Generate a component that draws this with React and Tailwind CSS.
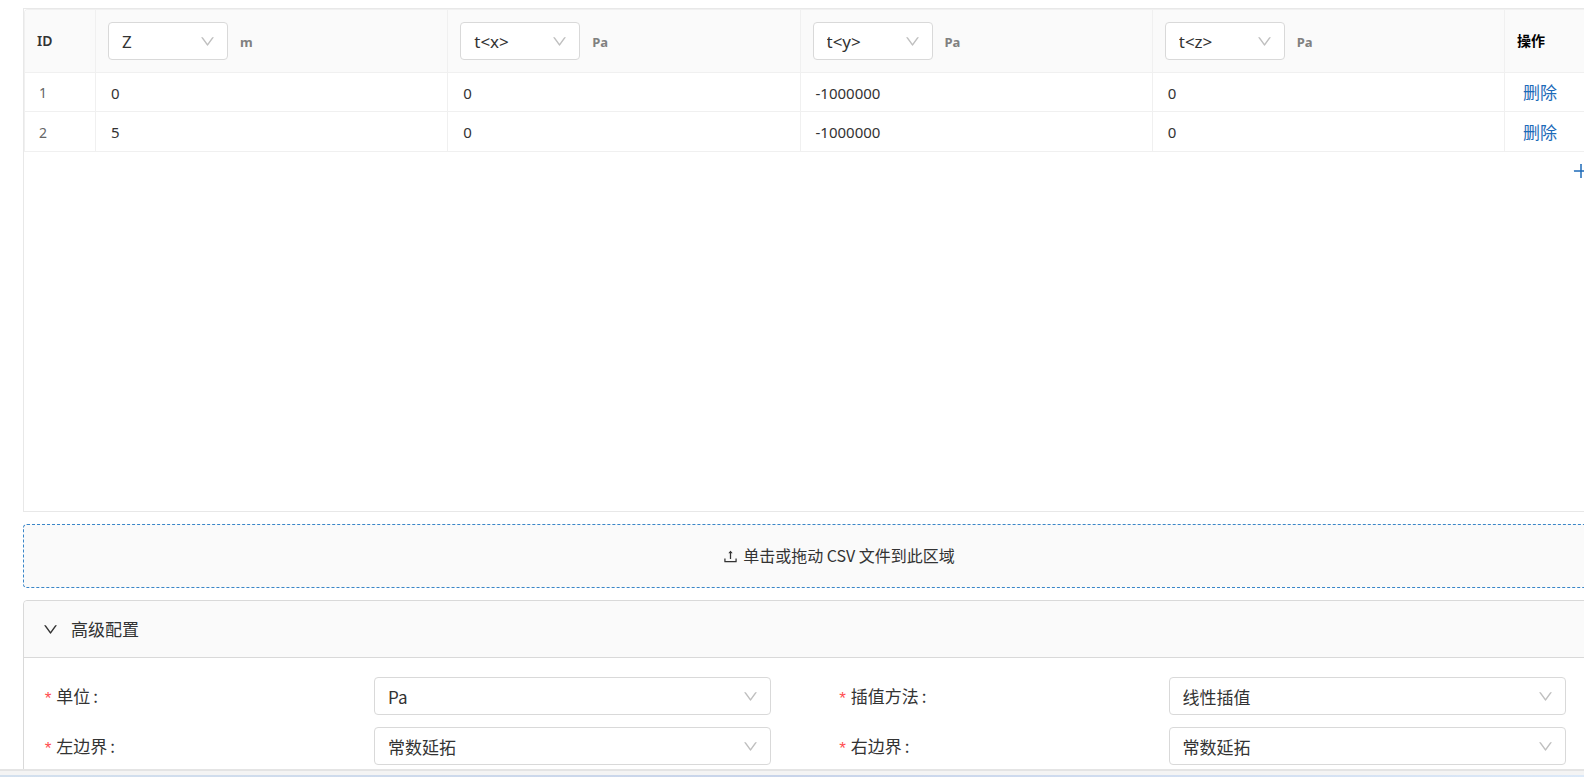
import { useState } from 'react'
import { AiOutlineDown, AiOutlinePlus, AiOutlineUpload } from 'react-icons/ai'

const AXES = ['X', 'Y', 'Z']
const COMPONENTS = ['t<x>', 't<y>', 't<z>']

const initialColumns = [
  { key: 'pos', label: '坐标', field: 'Z', unit: 'm', options: AXES },
  { key: 'tx', label: '第一分量', field: 't<x>', unit: 'Pa', options: COMPONENTS },
  { key: 'ty', label: '第二分量', field: 't<y>', unit: 'Pa', options: COMPONENTS },
  { key: 'tz', label: '第三分量', field: 't<z>', unit: 'Pa', options: COMPONENTS }
]

const initialRows = [
  { id: 1, pos: '0', tx: '0', ty: '-1000000', tz: '0' },
  { id: 2, pos: '5', tx: '0', ty: '-1000000', tz: '0' }
]

const fields = [
  { name: 'unit', label: '单位', options: ['Pa', 'kPa', 'MPa'] },
  { name: 'method', label: '插值方法', options: ['线性插值', '样条插值'] },
  { name: 'left', label: '左边界', options: ['常数延拓', '线性延拓'] },
  { name: 'right', label: '右边界', options: ['常数延拓', '线性延拓'] }
]

function Select({ options, className = '', ...props }) {
  return (
    <div className={`relative ${className}`}>
      <select
        {...props}
        className="block w-full h-[38px] pt-[2px] pl-[13px] pr-9 appearance-none bg-white border border-[#d9d9d9] rounded-[4px] text-[17px] leading-6 font-normal text-[#333333] outline-none focus:border-[#1c6ab8]"
      >
        {options.map(option => (
          <option key={option} value={option}>{option}</option>
        ))}
      </select>
      <AiOutlineDown className="absolute right-3 inset-y-0 my-auto size-[17px] text-[#bfbfbf] pointer-events-none" />
    </div>
  )
}

export default function App() {
  const [columns, setColumns] = useState(initialColumns)
  const [rows, setRows] = useState(initialRows)
  const [open, setOpen] = useState(true)

  const changeColumn = (key, field) => {
    setColumns(prev => prev.map(col => (col.key === key ? { ...col, field } : col)))
  }

  const addRow = () => {
    setRows(prev => [...prev, { id: prev.length + 1, pos: '0', tx: '0', ty: '0', tz: '0' }])
  }

  const removeRow = (id) => {
    setRows(prev => prev.filter(row => row.id !== id))
  }

  return (
    <div className="h-screen flex flex-col overflow-hidden bg-white text-[#333333] font-['Noto_Sans','Noto_Sans_CJK_SC',sans-serif]">
      <main className="flex-1 min-h-0 overflow-hidden">
        {/* The editor is wider than its pane and runs past the right edge */}
        <div className="pt-2 ml-[23px] -mr-[70px]">
          {/* Data table */}
          <div className="h-[504px] border border-[#e8e8e8] overflow-auto">
            <table className="w-full table-fixed border-separate border-spacing-0 border-t border-l border-[#f0f0f0] rounded-tl-[4px]">
              <thead>
                <tr className="h-[63px] bg-[#fafafa] text-left text-sm">
                  <th scope="col" className="w-[71px] px-3 border-r border-b border-[#f0f0f0] font-semibold rounded-tl-[4px]">ID</th>
                  {columns.map(col => (
                    <th key={col.key} scope="col" className="px-3 border-r border-b border-[#f0f0f0]">
                      <div className="flex items-center gap-3">
                        <Select
                          aria-label={col.label}
                          className="w-[120px]"
                          options={col.options}
                          value={col.field}
                          onChange={e => changeColumn(col.key, e.target.value)}
                        />
                        <span className="pt-[2px] text-[13px] font-bold text-[#808080]">{col.unit}</span>
                      </div>
                    </th>
                  ))}
                  <th scope="col" className="w-[148px] px-3 border-r border-b border-[#f0f0f0] font-bold text-black">操作</th>
                </tr>
              </thead>
              <tbody>
                {rows.map(row => (
                  <tr key={row.id} className="h-[39px] last:h-10">
                    <td className="pt-[2px] pl-[14px] border-r border-b border-[#f0f0f0] text-sm text-[#666666]">{row.id}</td>
                    {columns.map(col => (
                      <td key={col.key} className="pt-[2px] px-[15px] border-r border-b border-[#f0f0f0] text-[15px]">
                        {row[col.key]}
                      </td>
                    ))}
                    <td className="pt-[2px] pl-[18px] border-r border-b border-[#f0f0f0]">
                      <button
                        type="button"
                        onClick={() => removeRow(row.id)}
                        className="block text-[17px] leading-6 text-[#1c6ab8] cursor-pointer hover:text-[#4090d0]"
                      >
                        删除
                      </button>
                    </td>
                  </tr>
                ))}
              </tbody>
            </table>
            <div className="h-[38px] flex items-center justify-end pr-[62px]">
              <button type="button" aria-label="添加" onClick={addRow} className="text-[#1c6ab8] cursor-pointer">
                <AiOutlinePlus className="size-5" />
              </button>
            </div>
          </div>

          {/* CSV upload */}
          <label className="mt-3 h-16 flex items-center justify-center gap-1 border border-dashed border-[#3a86c8] rounded-[4px] bg-[#fafafa] text-base cursor-pointer">
            <AiOutlineUpload className="size-[17px]" />
            <span className="pb-[2px] font-['Noto_Sans_CJK_SC',sans-serif]">单击或拖动 CSV 文件到此区域</span>
            <input type="file" accept=".csv" className="sr-only" />
          </label>

          {/* Advanced settings */}
          <section className="mt-3 border border-[#d9d9d9] rounded-[4px]">
            <button
              type="button"
              aria-expanded={open}
              onClick={() => setOpen(!open)}
              className="w-full h-14 px-[18px] flex items-center gap-3 bg-[#fafafa] rounded-t-[4px] text-[17px] text-left cursor-pointer"
            >
              <AiOutlineDown className={`size-[17px] ${open ? '' : '-rotate-90'}`} />
              <span className="pt-[2px]">高级配置</span>
            </button>
            {open && (
              <div className="pl-[19px] pr-[21px] py-[19px] grid grid-cols-2 gap-y-3 border-t border-[#d9d9d9] font-['Noto_Sans_CJK_SC',sans-serif]">
                {fields.map(field => (
                  <div key={field.name} className="grid grid-cols-[10fr_12fr_2fr] items-center">
                    <label htmlFor={field.name} className="flex items-center gap-[3px] text-[17px] leading-6">
                      <span className="pt-2 font-['Liberation_Mono',monospace] text-[#ff4d4f]">*</span>
                      <span>{field.label}</span>
                      <span>:</span>
                    </label>
                    <Select id={field.name} name={field.name} options={field.options} />
                  </div>
                ))}
              </div>
            )}
          </section>
        </div>
      </main>
      <div className="h-2 shrink-0 border-t-2 border-[#e4e4e4] bg-[#f4f4f4] flex flex-col justify-end">
        <div className="h-[2px] bg-linear-to-r from-[#d3e0ee] via-[#c8d4ea] to-[#dce9f8]"></div>
      </div>
    </div>
  )
}
